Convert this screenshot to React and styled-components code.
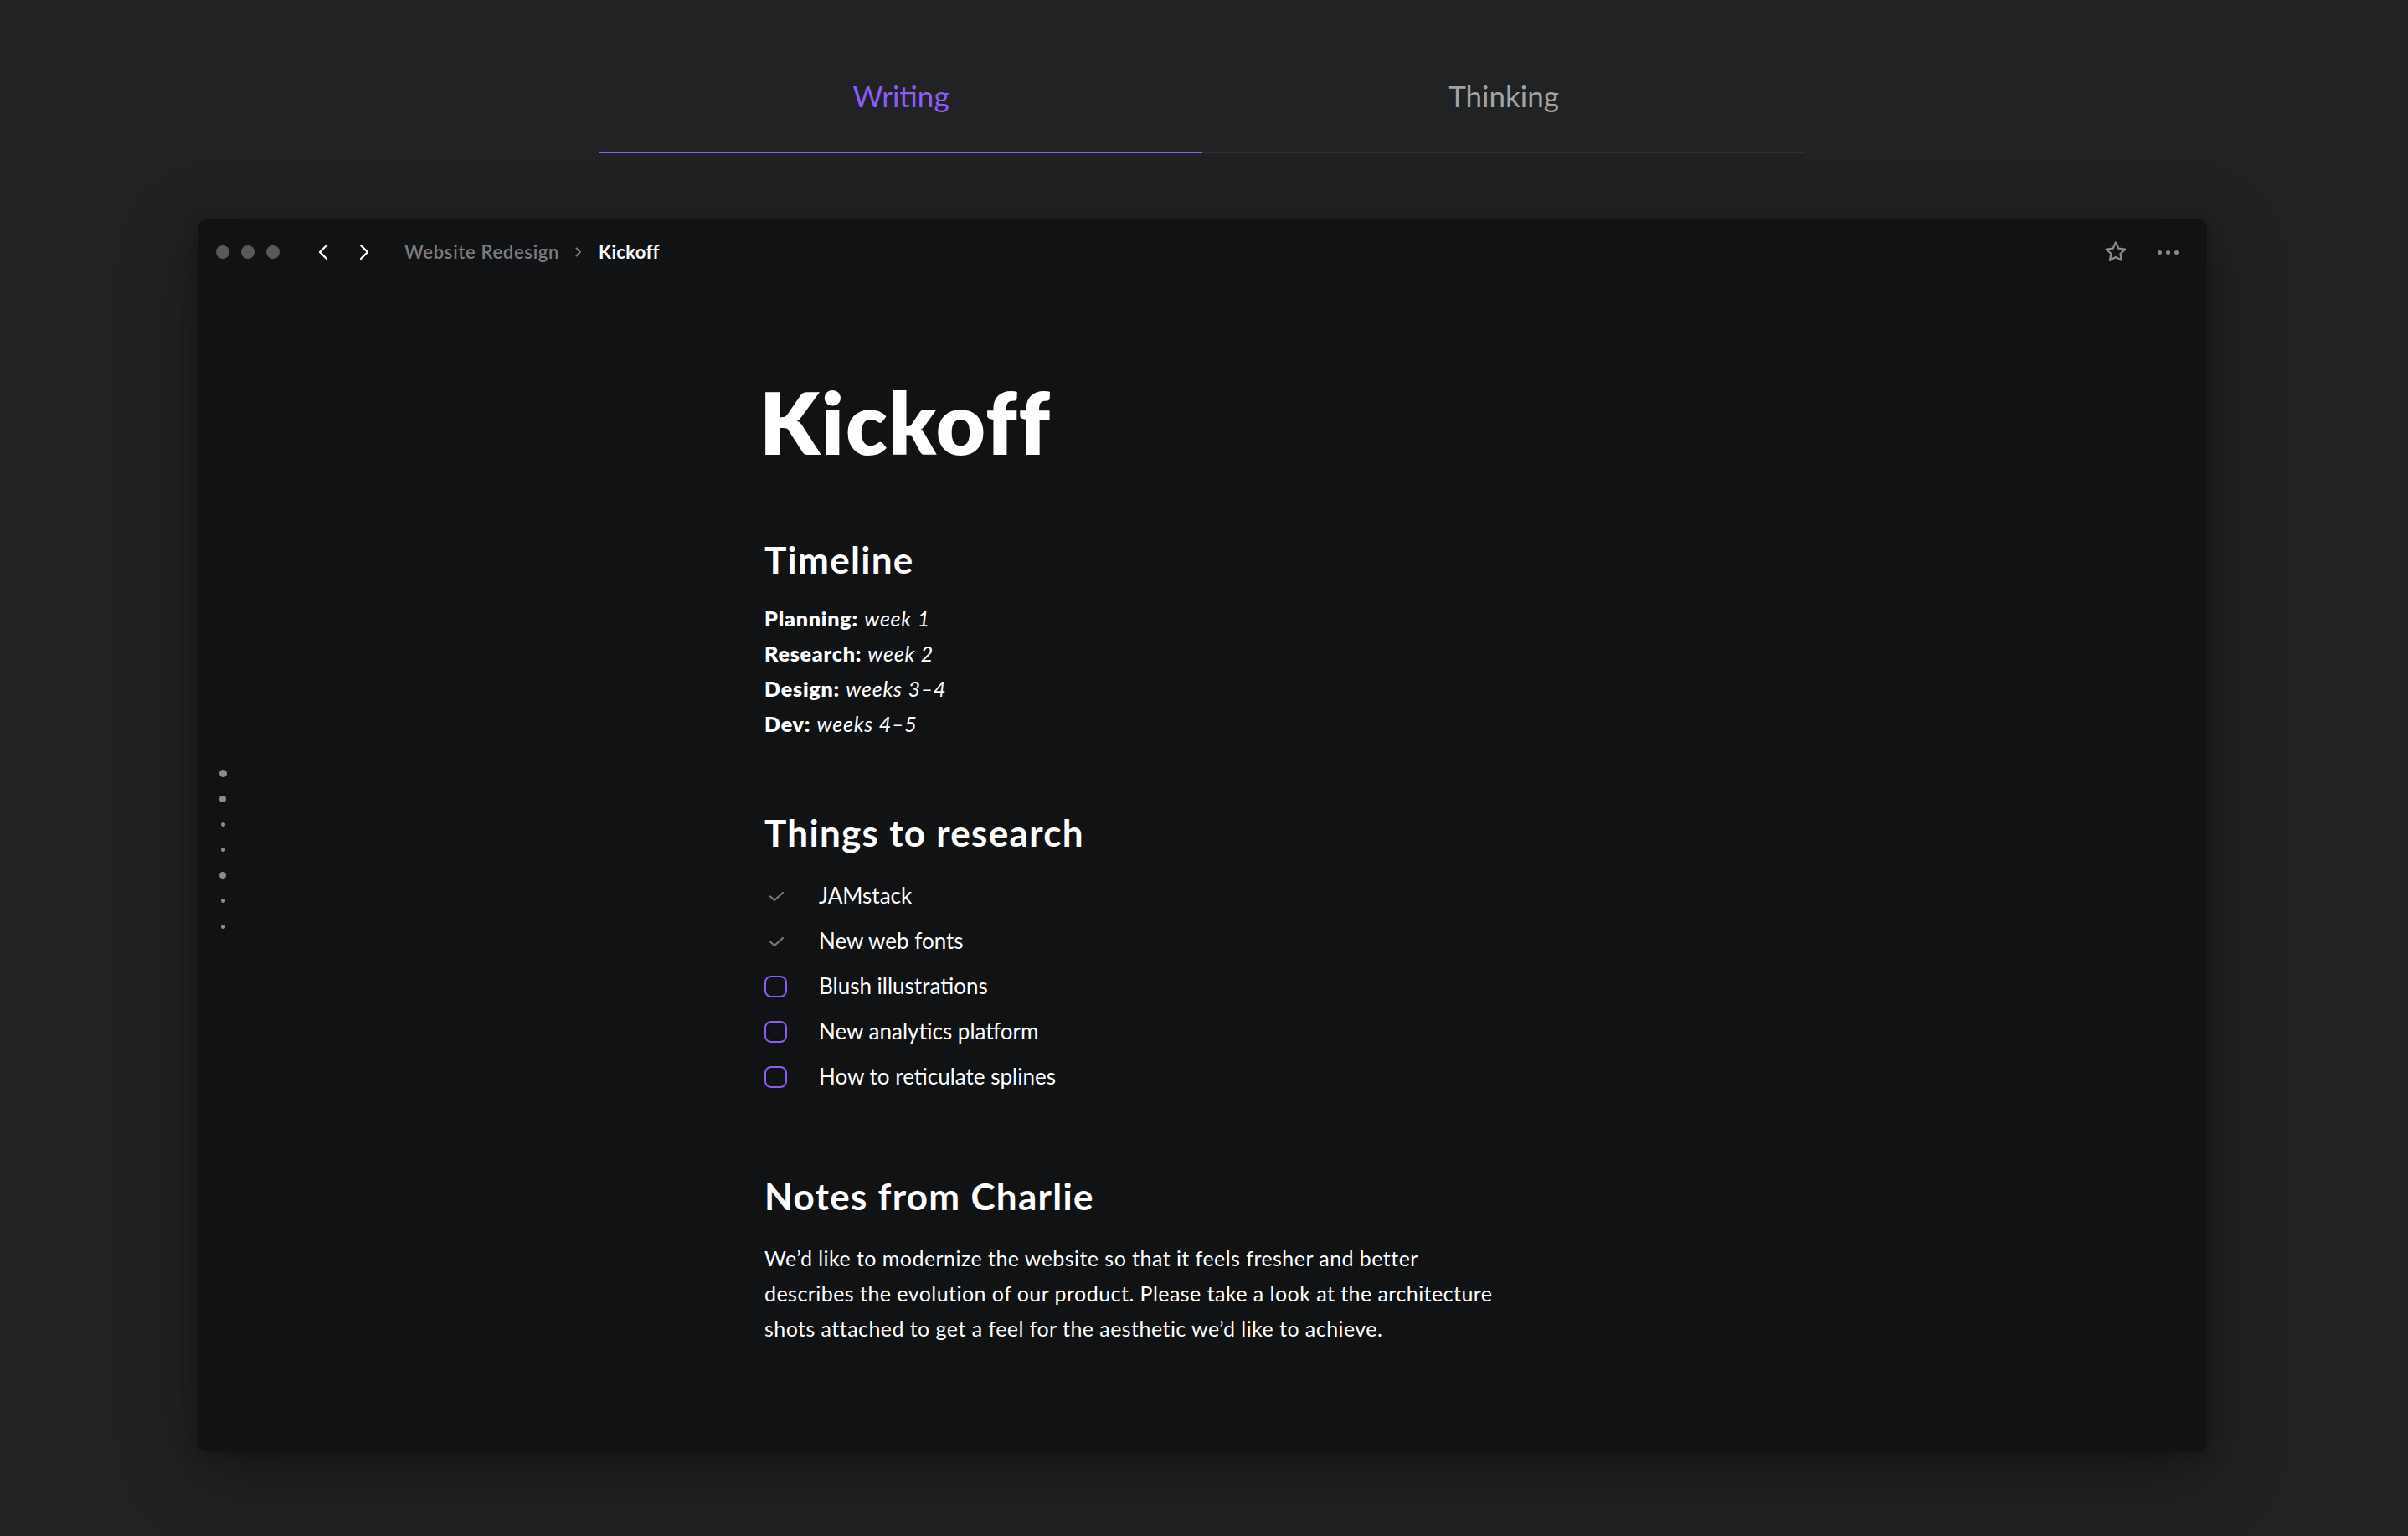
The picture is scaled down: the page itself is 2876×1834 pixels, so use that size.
import React from "react";
import styled, { createGlobalStyle } from "styled-components";

const GlobalStyle = createGlobalStyle`
  html, body { margin: 0; padding: 0; }
  body {
    background: #212224;
    font-family: Lato, "Noto Sans", "Liberation Sans", sans-serif;
    color: #f4f4f5;
    -webkit-font-smoothing: antialiased;
  }
  * { box-sizing: border-box; }
`;

const Page = styled.div`
  min-height: 1834px;
  display: flex;
  flex-direction: column;
  align-items: center;
  padding-top: 90px;
  padding-right: 4px;
`;

const TabBar = styled.div`
  width: 1440px;
  display: grid;
  grid-template-columns: 1fr 1fr;
  border-bottom: 2px solid #2e2f32;
`;

const Tab = styled.div`
  text-align: center;
  font-size: 35px;
  line-height: 48px;
  padding-bottom: 43px;
  margin-bottom: -2px;
  border-bottom: 2px solid ${(p) => (p.$active ? "#8b5cf6" : "transparent")};
  color: ${(p) => (p.$active ? "#8b5cf6" : "#a3a3a5")};
`;

const Window = styled.div`
  margin-top: 79px;
  width: 2400px;
  height: 1470px;
  background: #111214;
  border-radius: 10px;
  box-shadow: 0 24px 90px rgba(0, 0, 0, 0.38), 0 4px 18px rgba(0, 0, 0, 0.25);
  display: flex;
  flex-direction: column;
  overflow: hidden;
`;

const Toolbar = styled.div`
  height: 78px;
  flex: none;
  display: flex;
  align-items: center;
  padding: 0 34px 0 22px;
`;

const Lights = styled.div`
  display: flex;
  gap: 14px;
`;

const Light = styled.span`
  width: 16px;
  height: 16px;
  border-radius: 50%;
  background: #59595c;
`;

const Nav = styled.div`
  display: flex;
  align-items: center;
  gap: 35px;
  margin-left: 45px;
`;

const Crumbs = styled.div`
  display: flex;
  align-items: center;
  margin-left: 41px;
  font-size: 22px;
  line-height: 30px;
`;

const Crumb = styled.span`
  color: ${(p) => (p.$current ? "#ffffff" : "#7c7c7f")};
  font-weight: ${(p) => (p.$current ? 700 : 600)};
  letter-spacing: ${(p) => (p.$current ? "0.3px" : "0.7px")};
`;

const CrumbSep = styled.span`
  display: flex;
  margin: 0 20px 0 18px;
`;

const ToolActions = styled.div`
  margin-left: auto;
  display: flex;
  align-items: center;
  gap: 35px;
`;

const MoreDots = styled.div`
  display: flex;
  gap: 5px;
  span {
    width: 5px;
    height: 5px;
    border-radius: 50%;
    background: #8a8a8d;
  }
`;

const Body = styled.div`
  flex: 1;
  display: flex;
`;

const Rail = styled.div`
  width: 60px;
  flex: none;
  display: flex;
  flex-direction: column;
  align-items: center;
  padding-top: 568px;
`;

const RailSlot = styled.div`
  height: 30.5px;
  display: flex;
  align-items: center;
  justify-content: center;
`;

const RailDot = styled.span`
  width: ${(p) => p.$size}px;
  height: ${(p) => p.$size}px;
  border-radius: 50%;
  background: #8c8c8f;
`;

const Content = styled.div`
  margin-left: 617px;
  padding-top: 104px;
  display: flex;
  flex-direction: column;
  align-items: flex-start;
`;

const Title = styled.h1`
  margin: 0 0 0 -6px;
  font-size: 102px;
  line-height: 120px;
  font-weight: 800;
  color: #ffffff;
  letter-spacing: 1.8px;
`;

const Heading = styled.h2`
  margin: ${(p) => p.$top}px 0 ${(p) => p.$bottom}px 0;
  font-size: 44px;
  line-height: 56px;
  font-weight: 700;
  color: #ffffff;
  letter-spacing: 1.3px;
`;

const Lines = styled.div`
  display: flex;
  flex-direction: column;
`;

const Line = styled.div`
  font-size: 25px;
  line-height: 42px;
  color: #ffffff;
  letter-spacing: 0.8px;
  b { font-weight: 800; }
  i { font-style: italic; font-weight: 400; }
`;

const Checklist = styled.div`
  display: flex;
  flex-direction: column;
`;

const CheckRow = styled.div`
  display: flex;
  align-items: center;
  height: 54px;
  font-size: 26px;
  color: #ffffff;
`;

const CheckBoxSlot = styled.div`
  width: 65px;
  flex: none;
  display: flex;
  align-items: center;
`;

const Box = styled.span`
  width: 27px;
  height: 26px;
  border: 2.5px solid #8b5cf6;
  border-radius: 8px;
  margin-top: 2px;
`;

const CheckWrap = styled.span`
  display: flex;
  margin-left: 5px;
  margin-top: 2px;
`;

const Paragraph = styled.p`
  margin: 0;
  max-width: 876px;
  font-size: 25px;
  line-height: 42px;
  letter-spacing: 0.45px;
  color: #ffffff;
`;

const Chevron = ({ dir }) => (
  <svg width="14" height="20" viewBox="0 0 14 20" fill="none">
    <path
      d={dir === "left" ? "M11 2 L3 10 L11 18" : "M3 2 L11 10 L3 18"}
      stroke="#ffffff"
      strokeWidth="2.4"
      strokeLinecap="round"
      strokeLinejoin="round"
    />
  </svg>
);

const SmallChevron = () => (
  <svg width="9" height="12" viewBox="0 0 9 12" fill="none">
    <path d="M2.5 1.5 L7 6 L2.5 10.5" stroke="#7c7c7f" strokeWidth="2" strokeLinecap="round" strokeLinejoin="round" />
  </svg>
);

const StarIcon = () => (
  <svg width="30" height="30" viewBox="0 0 24 24" fill="none">
    <path
      d="M12 2.8 L14.75 8.55 L21 9.3 L16.4 13.6 L17.6 19.85 L12 16.8 L6.4 19.85 L7.6 13.6 L3 9.3 L9.25 8.55 Z"
      stroke="#8a8a8d"
      strokeWidth="1.9"
      strokeLinejoin="round"
    />
  </svg>
);

const CheckIcon = () => (
  <svg width="19" height="13" viewBox="0 0 19 13" fill="none">
    <path d="M2 6.5 L7 11 L17 2" stroke="#78787b" strokeWidth="2.2" strokeLinecap="round" strokeLinejoin="round" />
  </svg>
);

const railDots = [9, 8, 5, 5, 8, 5, 5];

const timeline = [
  ["Planning:", "week 1"],
  ["Research:", "week 2"],
  ["Design:", "weeks 3–4"],
  ["Dev:", "weeks 4–5"],
];

const todos = [
  ["JAMstack", true],
  ["New web fonts", true],
  ["Blush illustrations", false],
  ["New analytics platform", false],
  ["How to reticulate splines", false],
];

export default function App() {
  return (
    <>
      <GlobalStyle />
      <Page>
        <TabBar>
          <Tab $active>Writing</Tab>
          <Tab>Thinking</Tab>
        </TabBar>
        <Window>
          <Toolbar>
            <Lights>
              <Light />
              <Light />
              <Light />
            </Lights>
            <Nav>
              <Chevron dir="left" />
              <Chevron dir="right" />
            </Nav>
            <Crumbs>
              <Crumb>Website Redesign</Crumb>
              <CrumbSep>
                <SmallChevron />
              </CrumbSep>
              <Crumb $current>Kickoff</Crumb>
            </Crumbs>
            <ToolActions>
              <StarIcon />
              <MoreDots>
                <span />
                <span />
                <span />
              </MoreDots>
            </ToolActions>
          </Toolbar>
          <Body>
            <Rail>
              {railDots.map((s, i) => (
                <RailSlot key={i}>
                  <RailDot $size={s} />
                </RailSlot>
              ))}
            </Rail>
            <Content>
              <Title>Kickoff</Title>
              <Heading $top={76} $bottom={21}>Timeline</Heading>
              <Lines>
                {timeline.map(([k, v]) => (
                  <Line key={k}>
                    <b>{k}</b> <i>{v}</i>
                  </Line>
                ))}
              </Lines>
              <Heading $top={81} $bottom={20}>Things to research</Heading>
              <Checklist>
                {todos.map(([t, done]) => (
                  <CheckRow key={t}>
                    <CheckBoxSlot>
                      {done ? (
                        <CheckWrap>
                          <CheckIcon />
                        </CheckWrap>
                      ) : (
                        <Box />
                      )}
                    </CheckBoxSlot>
                    {t}
                  </CheckRow>
                ))}
              </Checklist>
              <Heading $top={88} $bottom={25}>Notes from Charlie</Heading>
              <Paragraph>
                We’d like to modernize the website so that it feels fresher and better describes the evolution of our
                product. Please take a look at the architecture shots attached to get a feel for the aesthetic we’d like
                to achieve.
              </Paragraph>
            </Content>
          </Body>
        </Window>
      </Page>
    </>
  );
}
